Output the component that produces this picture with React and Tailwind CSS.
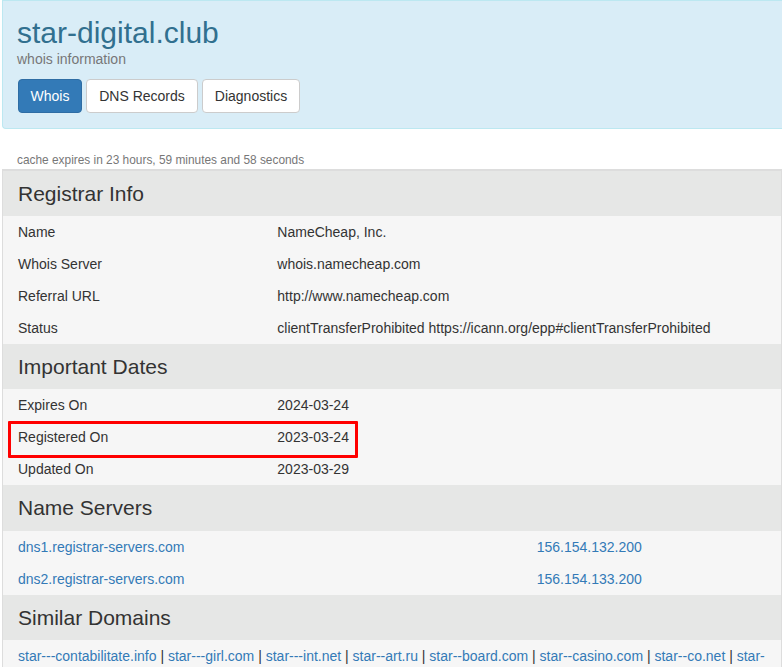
const font = { fontFamily: '"Liberation Sans", Arial, sans-serif' };

function Section({ children }) {
  return (
    <h3 className="h-[45.5px] bg-[#e6e7e6] pl-[15px] pt-[12px] text-[21px] leading-[22px] text-[#333] first:h-[44.5px]">{children}</h3>
  );
}

function Row({ label, value }) {
  return (
    <div className="grid h-8 grid-cols-3 items-center text-[14px] leading-5 text-[#333]">
      <div className="pl-[15px]">{label}</div>
      <div className="col-span-2 pl-[15px]">{value}</div>
    </div>
  );
}

function NsRow({ host, ip }) {
  return (
    <div className="grid h-8 grid-cols-3 items-center text-[14px] leading-5 text-[#337ab7]">
      <a className="col-span-2 pl-[15px]" href="#">{host}</a>
      <a className="pl-[15px]" href="#">{ip}</a>
    </div>
  );
}

const similar = [
  'star---contabilitate.info', 'star---girl.com', 'star---int.net', 'star--art.ru', 'star--board.com',
  'star--casino.com', 'star--co.net', 'star--design.com', 'star--energy.com', 'star--games.com',
];

export default function App() {
  return (
    <div className="relative h-[667px] overflow-hidden bg-white pl-[2px] pr-[1px]" style={font}>
      <header className="h-[129px] rounded-bl-[4px] border border-r-0 border-[#bce8f1] bg-[#d9edf7] pl-[15px] pt-[15px]">
        <h1 className="-ml-px text-[30px] leading-[33px] text-[#31708f]">star-digital.club</h1>
        <p className="-ml-px text-[14px] leading-5 text-[#777]">whois information</p>
        <nav className="mt-[10px] flex gap-[4px] text-[14px] leading-5">
          <a className="w-[64px] rounded-[4px] border border-[#2e6da4] bg-[#337ab7] py-[6px] text-center text-white" href="#">Whois</a>
          <a className="w-[112px] rounded-[4px] border border-[#ccc] bg-white py-[6px] text-center text-[#333]" href="#">DNS Records</a>
          <a className="w-[98px] rounded-[4px] border border-[#ccc] bg-white py-[6px] text-center text-[#333]" href="#">Diagnostics</a>
        </nav>
      </header>

      <p className="pl-[15px] pt-[23px] text-[11.88px] leading-[17px] text-[#777]">cache expires in 23 hours, 59 minutes and 58 seconds</p>

      <main className="border border-t-2 border-b-0 border-[#ddd] bg-[#f6f6f6]">
        <Section>Registrar Info</Section>
        <Row label="Name" value="NameCheap, Inc." />
        <Row label="Whois Server" value="whois.namecheap.com" />
        <Row label="Referral URL" value="http://www.namecheap.com" />
        <Row label="Status" value="clientTransferProhibited https://icann.org/epp#clientTransferProhibited" />
        <Section>Important Dates</Section>
        <Row label="Expires On" value="2024-03-24" />
        <Row label="Registered On" value="2023-03-24" />
        <Row label="Updated On" value="2023-03-29" />
        <Section>Name Servers</Section>
        <NsRow host="dns1.registrar-servers.com" ip="156.154.132.200" />
        <NsRow host="dns2.registrar-servers.com" ip="156.154.133.200" />
        <Section>Similar Domains</Section>
        <p className="px-[15px] pt-[6px] text-[14px] leading-5 text-[#333]">
          {similar.map((d, i) => (
            <span key={d}>
              {i > 0 && ' | '}
              <a className="text-[#337ab7]" href="#">{d}</a>
            </span>
          ))}
        </p>
      </main>

      <div className="pointer-events-none absolute left-[8px] top-[421px] h-[37px] w-[350px] rounded-[1px] border-[3px] border-[#f00]" />
    </div>
  );
}
